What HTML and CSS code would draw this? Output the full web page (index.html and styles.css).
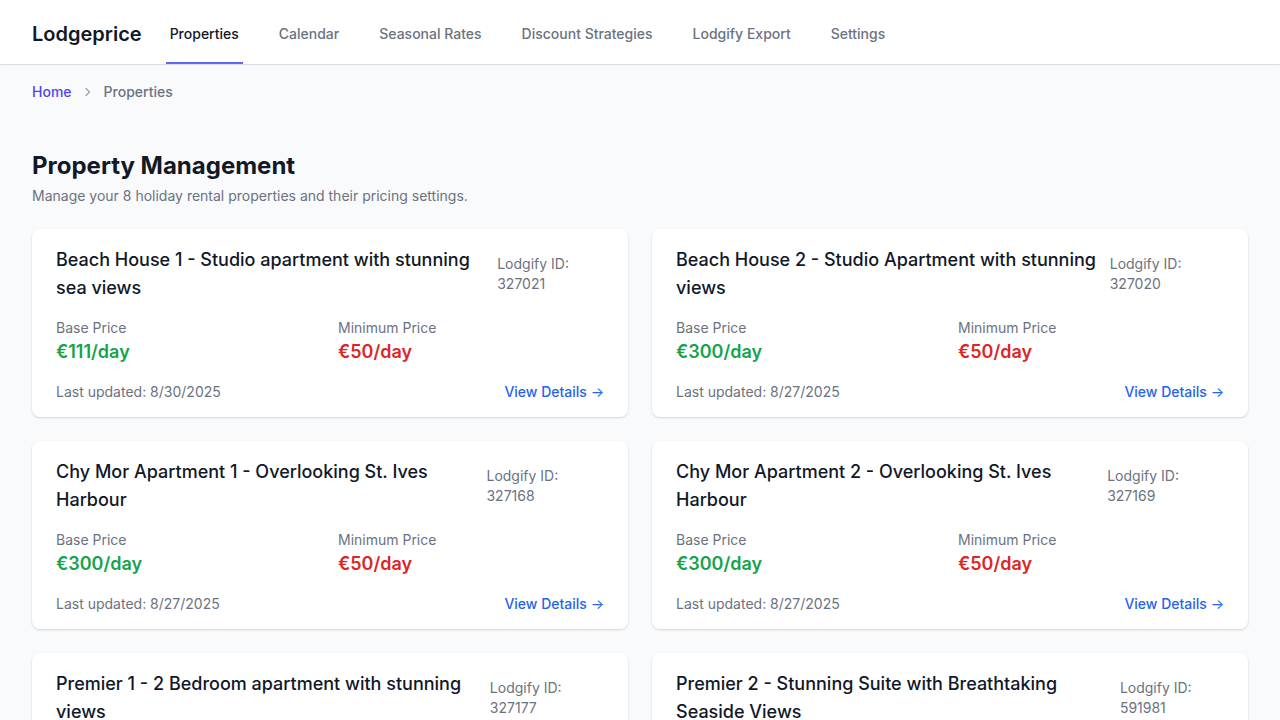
FILE: index.html
```html
<!DOCTYPE html>
<html lang="en">
<head>
<meta charset="utf-8">
<title>Lodgeprice - Properties</title>
<link rel="stylesheet" href="styles.css">
</head>
<body>
<header class="topbar">
  <div class="logo">Lodgeprice</div>
  <nav class="nav">
    <a class="nav-link active" href="#">Properties</a>
    <a class="nav-link" href="#">Calendar</a>
    <a class="nav-link" href="#">Seasonal Rates</a>
    <a class="nav-link" href="#">Discount Strategies</a>
    <a class="nav-link" href="#">Lodgify Export</a>
    <a class="nav-link" href="#">Settings</a>
  </nav>
</header>
<main class="main">
  <div class="breadcrumb">
    <a class="crumb-link" href="#">Home</a>
    <svg class="crumb-sep" width="16" height="16" viewBox="0 0 16 16" fill="none"><path d="M6 4.5l3.5 3.5L6 11.5" stroke="#9ca3af" stroke-width="1.3" stroke-linecap="round" stroke-linejoin="round"/></svg>
    <span class="crumb-current">Properties</span>
  </div>
  <h1 class="page-title">Property Management</h1>
  <p class="page-sub">Manage your 8 holiday rental properties and their pricing settings.</p>
  <div class="grid">
    <div class="card">
      <div class="card-head"><h3 class="card-title">Beach House 1 - Studio apartment with stunning sea views</h3><div class="card-id">Lodgify ID: 327021</div></div>
      <div class="prices"><div><div class="label">Base Price</div><div class="price base">€111/day</div></div><div><div class="label">Minimum Price</div><div class="price min">€50/day</div></div></div>
      <div class="card-foot"><span class="updated">Last updated: 8/30/2025</span><a class="details" href="#">View Details <span class="arrow">→</span></a></div>
    </div>
    <div class="card">
      <div class="card-head"><h3 class="card-title">Beach House 2 - Studio Apartment with stunning views</h3><div class="card-id">Lodgify ID: 327020</div></div>
      <div class="prices"><div><div class="label">Base Price</div><div class="price base">€300/day</div></div><div><div class="label">Minimum Price</div><div class="price min">€50/day</div></div></div>
      <div class="card-foot"><span class="updated">Last updated: 8/27/2025</span><a class="details" href="#">View Details <span class="arrow">→</span></a></div>
    </div>
    <div class="card">
      <div class="card-head"><h3 class="card-title">Chy Mor Apartment 1 - Overlooking St. Ives Harbour</h3><div class="card-id">Lodgify ID: 327168</div></div>
      <div class="prices"><div><div class="label">Base Price</div><div class="price base">€300/day</div></div><div><div class="label">Minimum Price</div><div class="price min">€50/day</div></div></div>
      <div class="card-foot"><span class="updated">Last updated: 8/27/2025</span><a class="details" href="#">View Details <span class="arrow">→</span></a></div>
    </div>
    <div class="card">
      <div class="card-head"><h3 class="card-title">Chy Mor Apartment 2 - Overlooking St. Ives Harbour</h3><div class="card-id">Lodgify ID: 327169</div></div>
      <div class="prices"><div><div class="label">Base Price</div><div class="price base">€300/day</div></div><div><div class="label">Minimum Price</div><div class="price min">€50/day</div></div></div>
      <div class="card-foot"><span class="updated">Last updated: 8/27/2025</span><a class="details" href="#">View Details <span class="arrow">→</span></a></div>
    </div>
    <div class="card">
      <div class="card-head"><h3 class="card-title">Premier 1 - 2 Bedroom apartment with stunning views</h3><div class="card-id">Lodgify ID: 327177</div></div>
      <div class="prices"><div><div class="label">Base Price</div><div class="price base">€300/day</div></div><div><div class="label">Minimum Price</div><div class="price min">€50/day</div></div></div>
      <div class="card-foot"><span class="updated">Last updated: 8/27/2025</span><a class="details" href="#">View Details <span class="arrow">→</span></a></div>
    </div>
    <div class="card">
      <div class="card-head"><h3 class="card-title">Premier 2 - Stunning Suite with Breathtaking Seaside Views</h3><div class="card-id">Lodgify ID: 591981</div></div>
      <div class="prices"><div><div class="label">Base Price</div><div class="price base">€300/day</div></div><div><div class="label">Minimum Price</div><div class="price min">€50/day</div></div></div>
      <div class="card-foot"><span class="updated">Last updated: 8/27/2025</span><a class="details" href="#">View Details <span class="arrow">→</span></a></div>
    </div>
  </div>
</main>
</body>
</html>
```
FILE: styles.css
```css
* { box-sizing: border-box; }
html, body { margin: 0; padding: 0; }
body {
  font-family: Inter, "Noto Sans", "Liberation Sans", sans-serif;
  background: #f9fafb;
  color: #111827;
}
a { text-decoration: none; }

.topbar {
  height: 64px;
  background: #fff;
  display: flex;
  align-items: stretch;
  padding: 0 32px;
  box-shadow: 0 1px 2px rgba(0,0,0,0.06), 0 1px 0 #e5e7eb;
  position: relative;
}
.logo {
  font-size: 20px;
  line-height: 28px;
  font-weight: 600;
  color: #111827;
  display: flex;
  align-items: center;
  padding-top: 4px;
}
.nav {
  display: flex;
  gap: 32px;
  margin-left: 24px;
}
.nav-link {
  display: flex;
  align-items: center;
  padding: 6px 4px 0;
  font-size: 14px;
  line-height: 20px;
  font-weight: 500;
  color: #6b7280;
  border-bottom: 2px solid transparent;
}
.nav-link.active {
  color: #111827;
  border-bottom-color: #6366f1;
}

.main { padding: 0 32px 32px; }

.breadcrumb {
  display: flex;
  align-items: center;
  gap: 8px;
  padding-top: 18px;
  font-size: 14px;
  line-height: 20px;
}
.crumb-link { color: #4f46e5; font-weight: 500; }
.crumb-sep { display: block; }
.crumb-current { color: #6b7280; font-weight: 500; }

.page-title {
  margin: 48px 0 0;
  font-size: 24px;
  line-height: 32px;
  font-weight: 700;
  color: #111827;
}
.page-sub {
  margin: 4px 0 0;
  font-size: 14px;
  line-height: 20px;
  color: #6b7280;
}

.grid {
  margin-top: 23px;
  display: grid;
  grid-template-columns: 1fr 1fr;
  gap: 24px;
}
.card {
  background: #fff;
  border-radius: 8px;
  padding: 17px 24px 15px;
  box-shadow: 0 1px 3px rgba(0,0,0,0.1), 0 1px 2px rgba(0,0,0,0.06);
}
.card-head {
  display: flex;
  align-items: center;
  justify-content: space-between;
  gap: 6px;
}
.card-title {
  margin: 0;
  font-size: 18px;
  line-height: 28px;
  font-weight: 500;
  color: #111827;
}
.card-id {
  font-size: 14px;
  line-height: 20px;
  color: #6b7280;
}
.prices {
  margin-top: 16px;
  display: grid;
  grid-template-columns: 1fr 1fr;
  gap: 16px;
}
.label {
  font-size: 14px;
  line-height: 20px;
  color: #6b7280;
}
.price {
  font-size: 18px;
  line-height: 28px;
  font-weight: 600;
}
.price.base { color: #16a34a; }
.price.min { color: #dc2626; }
.card-foot {
  margin-top: 16px;
  display: flex;
  justify-content: space-between;
  align-items: center;
  font-size: 14px;
  line-height: 20px;
}
.updated { color: #6b7280; }
.details { color: #2563eb; font-weight: 500; }
.arrow { font-weight: 400; }
```
